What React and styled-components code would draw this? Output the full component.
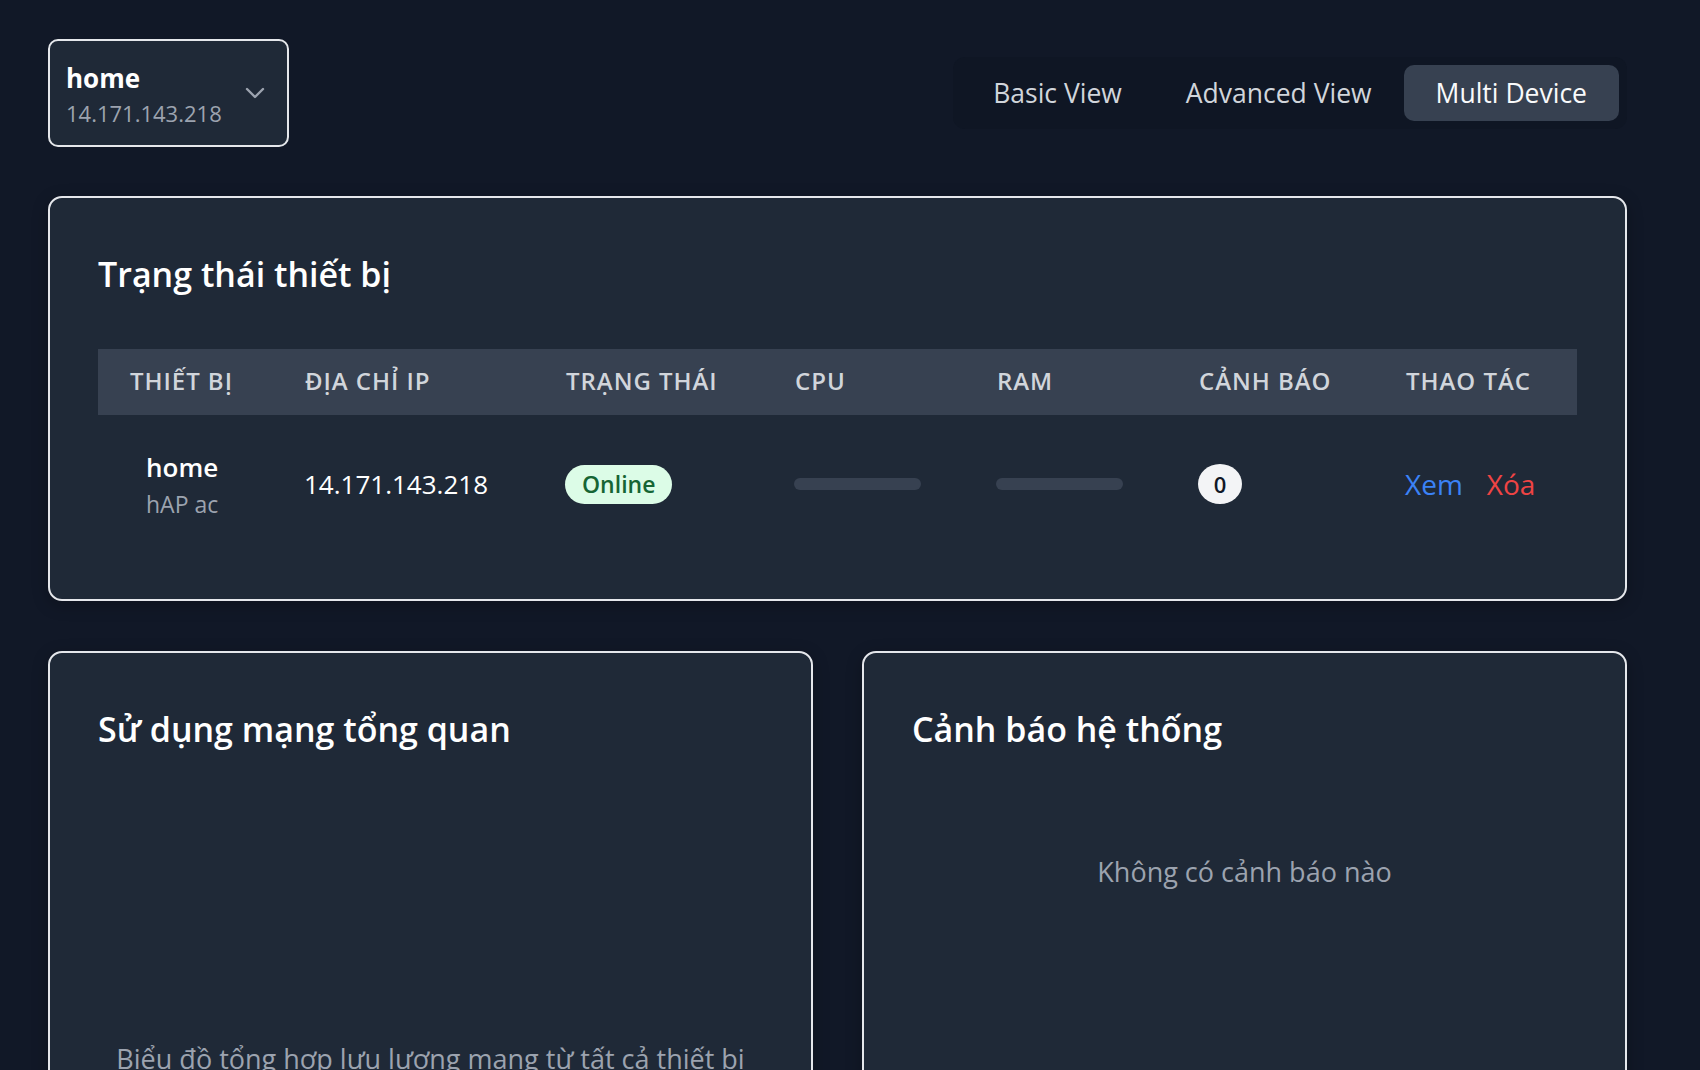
import React from "react";
import styled, { createGlobalStyle } from "styled-components";

const GlobalStyle = createGlobalStyle`
  html {
    background: #111827;
    overflow-y: scroll;
  }
  ::-webkit-scrollbar { width: 8px; height: 7px; }
  ::-webkit-scrollbar-track { background: #111827; }
  ::-webkit-scrollbar-thumb { background: #374151; border-radius: 4px; }
  ::-webkit-scrollbar-corner { background: #0d1321; }
  body {
    margin: 0;
    background: #111827;
    color: #f9fafb;
    font-family: "Open Sans", "Noto Sans", sans-serif;
  }
  * { box-sizing: border-box; }
`;

const Page = styled.div`
  min-height: 2274px;
  padding: 39px 0 0 48px;
`;

const Container = styled.div`
  width: 1579px;
`;

const TopBar = styled.header`
  display: flex;
  align-items: center;
  justify-content: space-between;
  margin-bottom: 49px;
`;

const DeviceSelect = styled.button`
  display: flex;
  align-items: center;
  justify-content: space-between;
  width: 241px;
  height: 108px;
  padding: 0 22px 0 16px;
  background: #1f2937;
  border: 2px solid #e5e7eb;
  border-radius: 10px;
  font-family: inherit;
  text-align: left;
  cursor: pointer;
`;

const SelectText = styled.div`
  display: flex;
  flex-direction: column;
  gap: 1px;
  padding-top: 2px;
`;

const SelectName = styled.span`
  font-size: 26px;
  font-weight: 700;
  line-height: 36px;
  color: #ffffff;
`;

const SelectIp = styled.span`
  font-size: 22px;
  line-height: 32px;
  color: #9ca3af;
`;

const Chevron = styled.svg`
  width: 20px;
  height: 12px;
  flex-shrink: 0;
`;

const TabGroup = styled.nav`
  display: flex;
  padding: 8px;
  background: #0f1624;
  border-radius: 12px;
`;

const Tab = styled.button`
  height: 56px;
  padding: 0 32px;
  border: none;
  border-radius: 10px;
  background: ${(p) => (p.$active ? "#374151" : "transparent")};
  color: ${(p) => (p.$active ? "#f9fafb" : "#d1d5db")};
  font-family: inherit;
  font-size: 26.5px;
  cursor: pointer;
`;

const Card = styled.section`
  background: #1f2937;
  border: 2px solid #e5e7eb;
  border-radius: 14px;
  padding: 52px 48px 48px;
  box-shadow: 0 4px 16px rgba(0, 0, 0, 0.25);
`;

const CardTitle = styled.h2`
  margin: 0 0 ${(p) => p.$gap || 0}px;
  font-size: 34px;
  font-weight: 600;
  line-height: 48px;
  color: #ffffff;
`;

const columns = "175px 261px 229px 202px 202px 207px 1fr";

const HeaderRow = styled.div`
  display: grid;
  grid-template-columns: ${columns};
  align-items: center;
  height: 66px;
  background: #374151;
`;

const HeaderCell = styled.div`
  padding-left: 32px;
  padding-bottom: 3px;
  font-size: 24px;
  font-weight: 600;
  letter-spacing: 0.04em;
  color: #d1d5db;
  white-space: nowrap;
`;

const BodyRow = styled.div`
  display: grid;
  grid-template-columns: ${columns};
  align-items: center;
  padding: 30px 0 28px;
`;

const Cell = styled.div`
  padding-left: ${(p) => (p.$indent ? 48 : 31)}px;
  display: flex;
  align-items: center;
  gap: 24px;
`;

const DeviceInfo = styled.div`
  display: flex;
  flex-direction: column;
  padding-top: 4px;
`;

const DeviceName = styled.span`
  font-size: 26px;
  font-weight: 600;
  line-height: 36px;
  color: #ffffff;
`;

const DeviceModel = styled.span`
  font-size: 23px;
  line-height: 38px;
  color: #9ca3af;
`;

const IpText = styled.span`
  font-size: 26px;
  color: #ffffff;
`;

const Badge = styled.span`
  display: inline-flex;
  align-items: center;
  height: 39px;
  padding: 0 17px;
  border-radius: 20px;
  background: #dcfce7;
  color: #166534;
  font-size: 23px;
  font-weight: 600;
`;

const Bar = styled.div`
  width: 127px;
  height: 12px;
  border-radius: 6px;
  background: #374151;
  overflow: hidden;
`;

const BarFill = styled.div`
  height: 100%;
  background: #3b82f6;
`;

const Count = styled.span`
  display: inline-flex;
  align-items: center;
  justify-content: center;
  width: 44px;
  height: 40px;
  border-radius: 50%;
  background: #f3f4f6;
  color: #111827;
  font-size: 22px;
  font-weight: 600;
`;

const Action = styled.a`
  font-size: 28px;
  font-weight: 500;
  color: ${(p) => (p.$danger ? "#ef4444" : "#3b82f6")};
  text-decoration: none;
  cursor: pointer;
`;

const LowerGrid = styled.div`
  display: grid;
  grid-template-columns: 1fr 1fr;
  gap: 49px;
  margin-top: 50px;
`;

const ChartArea = styled.div`
  height: 286px;
`;

const MutedText = styled.p`
  margin: 0;
  padding-top: ${(p) => p.$top || 0}px;
  font-size: 27px;
  line-height: 40px;
  color: #9ca3af;
  text-align: center;
`;

const devices = [
  { name: "home", model: "hAP ac", ip: "14.171.143.218", status: "Online", cpu: 0, ram: 0, alerts: 0 },
];

const headers = ["THIẾT BỊ", "ĐỊA CHỈ IP", "TRẠNG THÁI", "CPU", "RAM", "CẢNH BÁO", "THAO TÁC"];

export default function App() {
  return (
    <>
      <GlobalStyle />
      <Page>
        <Container>
          <TopBar>
            <DeviceSelect>
              <SelectText>
                <SelectName>home</SelectName>
                <SelectIp>14.171.143.218</SelectIp>
              </SelectText>
              <Chevron viewBox="0 0 20 12" fill="none">
                <polyline points="2,2 10,10 18,2" stroke="#9ca3af" strokeWidth="2.4" strokeLinecap="round" strokeLinejoin="round" />
              </Chevron>
            </DeviceSelect>
            <TabGroup>
              <Tab>Basic View</Tab>
              <Tab>Advanced View</Tab>
              <Tab $active>Multi Device</Tab>
            </TabGroup>
          </TopBar>

          <Card>
            <CardTitle $gap={51}>Trạng thái thiết bị</CardTitle>
            <HeaderRow>
              {headers.map((h) => (
                <HeaderCell key={h}>{h}</HeaderCell>
              ))}
            </HeaderRow>
            {devices.map((d) => (
              <BodyRow key={d.ip}>
                <Cell $indent>
                  <DeviceInfo>
                    <DeviceName>{d.name}</DeviceName>
                    <DeviceModel>{d.model}</DeviceModel>
                  </DeviceInfo>
                </Cell>
                <Cell>
                  <IpText>{d.ip}</IpText>
                </Cell>
                <Cell>
                  <Badge>{d.status}</Badge>
                </Cell>
                <Cell>
                  <Bar>
                    <BarFill style={{ width: `${d.cpu}%` }} />
                  </Bar>
                </Cell>
                <Cell>
                  <Bar>
                    <BarFill style={{ width: `${d.ram}%` }} />
                  </Bar>
                </Cell>
                <Cell>
                  <Count>{d.alerts}</Count>
                </Cell>
                <Cell>
                  <Action>Xem</Action>
                  <Action $danger>Xóa</Action>
                </Cell>
              </BodyRow>
            ))}
          </Card>

          <LowerGrid>
            <Card>
              <CardTitle>Sử dụng mạng tổng quan</CardTitle>
              <ChartArea />
              <MutedText>Biểu đồ tổng hợp lưu lượng mạng từ tất cả thiết bị</MutedText>
            </Card>
            <Card>
              <CardTitle>Cảnh báo hệ thống</CardTitle>
              <MutedText $top={99}>Không có cảnh báo nào</MutedText>
            </Card>
          </LowerGrid>
        </Container>
      </Page>
    </>
  );
}
